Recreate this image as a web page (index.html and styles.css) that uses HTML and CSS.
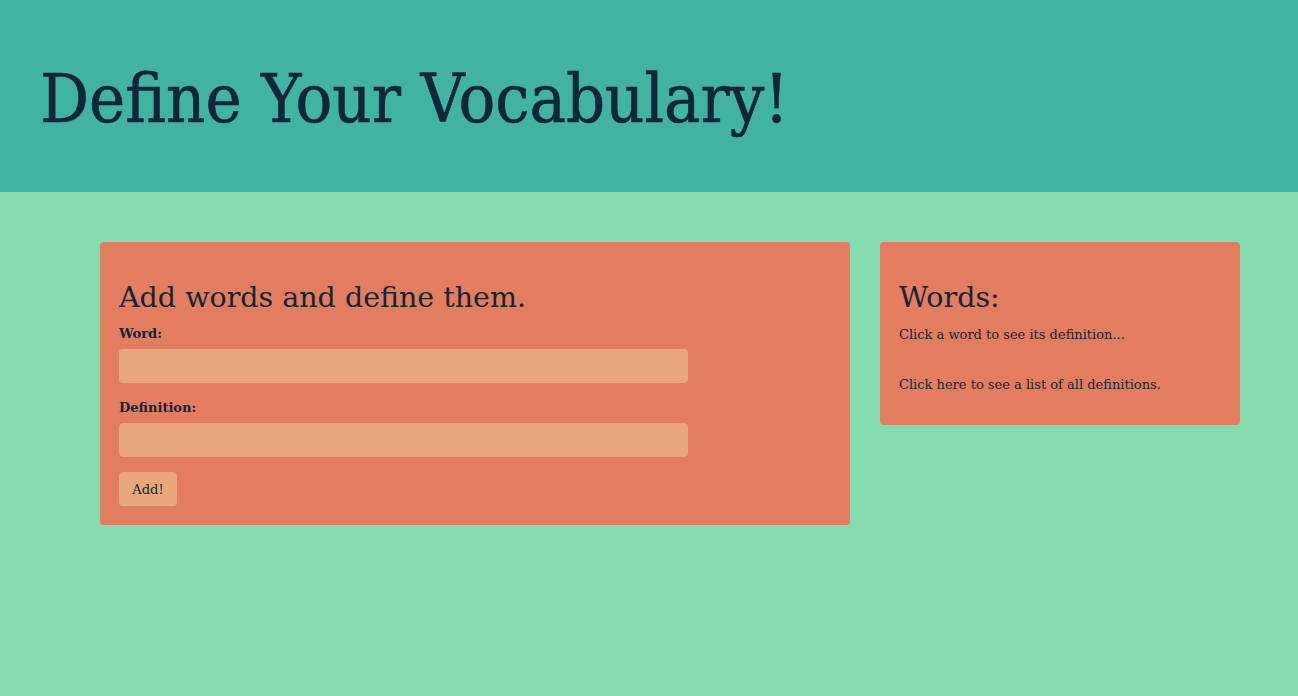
FILE: index.html
```html
<!DOCTYPE html>
<html>
<head>
<meta charset="utf-8">
<title>Define Your Vocabulary!</title>
<link rel="stylesheet" href="styles.css">
</head>
<body>
<header class="banner">
  <h1 class="title">Define Your Vocabulary!</h1>
</header>
<main class="content">
  <section class="card card-add">
    <h2 class="card-heading">Add words and define them.</h2>
    <form class="add-form">
      <label class="field-label" for="word">Word:</label>
      <input class="field-input" id="word" type="text">
      <label class="field-label" for="definition">Definition:</label>
      <input class="field-input" id="definition" type="text">
      <button class="add-button" type="button">Add!</button>
    </form>
  </section>
  <section class="card card-words">
    <h2 class="card-heading">Words:</h2>
    <p class="note">Click a word to see its definition...</p>
    <p class="note note-link">Click here to see a list of all definitions.</p>
  </section>
</main>
</body>
</html>
```
FILE: styles.css
```css
* { box-sizing: border-box; }
html, body {
  margin: 0;
  padding: 0;
}
body {
  background: #85dcb0;
  color: #132639;
  font-family: "DejaVu Serif", "Liberation Serif", serif;
  height: 696px;
  overflow: hidden;
}
.banner {
  background: #41b3a3;
  height: 192px;
  display: flex;
  align-items: center;
  padding: 6px 40px 0;
}
.title {
  margin: 0;
  font-family: "DejaVu Serif Condensed", "DejaVu Serif", serif;
  font-size: 68px;
  font-weight: normal;
  line-height: 1;
  color: #132639;
  -webkit-text-stroke: 0.6px #132639;
}
.content {
  display: flex;
  align-items: flex-start;
  gap: 30px;
  padding: 50px 0 0 100px;
}
.card {
  background: #e27d60;
  border-radius: 4px;
  padding: 38px 19px 19px;
}
.card-add { width: 750px; }
.card-words { width: 360px; padding-bottom: 31px; }
.card-heading {
  margin: 0 0 10px;
  font-size: 28.5px;
  font-weight: normal;
  line-height: 36px;
}
.add-form {
  display: flex;
  flex-direction: column;
  align-items: flex-start;
}
.field-label {
  font-size: 13px;
  font-weight: bold;
  line-height: 16px;
  margin-bottom: 7px;
}
.field-input {
  width: 569px;
  height: 34px;
  border: none;
  border-radius: 4px;
  background: #e8a87c;
  margin-bottom: 17px;
  font-family: inherit;
}
.add-button {
  height: 34px;
  width: 58px;
  border: none;
  border-radius: 4px;
  background: #e8a87c;
  color: #132639;
  font-family: inherit;
  font-size: 13px;
  padding: 0;
}
.add-form .field-input + .add-button { margin-top: -2px; }
.note {
  margin: 0;
  font-size: 13px;
  line-height: 18px;
}
.note-link { margin-top: 32px; }
```
